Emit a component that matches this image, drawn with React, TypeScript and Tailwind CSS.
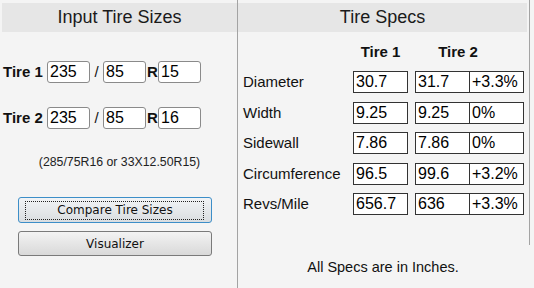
import React from 'react';

const specs = [
  { label: 'Diameter', t1: '30.7', t2: '31.7', diff: '+3.3%' },
  { label: 'Width', t1: '9.25', t2: '9.25', diff: '0%' },
  { label: 'Sidewall', t1: '7.86', t2: '7.86', diff: '0%' },
  { label: 'Circumference', t1: '96.5', t2: '99.6', diff: '+3.2%' },
  { label: 'Revs/Mile', t1: '656.7', t2: '636', diff: '+3.3%' },
];

const SizeInput = ({ value }: { value: string }) => (
  <div className="w-[43px] h-[22px] bg-white border border-[#8a8a8a] rounded-[3px] pl-[2px] text-[16px] leading-[20px] text-black">
    {value}
  </div>
);

const TireRow = ({ label, w, a, r }: { label: string; w: string; a: string; r: string }) => (
  <div className="flex items-center pl-[1px]">
    <span className="font-bold text-[15px] w-[44px]">{label}</span>
    <SizeInput value={w} />
    <span className="w-[13px] text-center text-[15px]">/</span>
    <SizeInput value={a} />
    <span className="font-bold text-[15px] w-[12px] pl-[1px]">R</span>
    <SizeInput value={r} />
  </div>
);

const Cell = ({ value, className = '' }: { value: string; className?: string }) => (
  <div className={`h-[22px] bg-white border border-[#333] pl-[2px] text-[16px] leading-[20px] text-black ${className}`}>
    {value}
  </div>
);

export default function App() {
  return (
    <div
      className="w-[534px] h-[288px] bg-[#f4f4f4] flex text-[#111]"
      style={{ fontFamily: '"Liberation Sans", Arial, sans-serif' }}
    >
      {/* Input panel */}
      <div className="w-[238px] h-full pl-[2px] border-r border-[#a3a3a3]">
        <div className="mt-[3px] h-[29px] bg-[#e6e6e6] flex items-center justify-center text-[18px] text-[#1a1a1a]">
          Input Tire Sizes
        </div>
        <div className="mt-[29px]">
          <TireRow label="Tire 1" w="235" a="85" r="15" />
        </div>
        <div className="mt-[23px]">
          <TireRow label="Tire 2" w="235" a="85" r="16" />
        </div>
        <div className="mt-[26px] text-center text-[12.3px] leading-[14px] text-[#222]">
          (285/75R16 or 33X12.50R15)
        </div>
        <div className="mt-[28px] ml-[16px] w-[194px] flex flex-col gap-[8px]" style={{ fontFamily: '"DejaVu Sans", sans-serif' }}>
          <button className="relative h-[26px] rounded-[3px] border border-[#3c8ec8] bg-gradient-to-b from-[#f2f4f6] to-[#d9dde0] text-[12px] text-[#111]">
            <span className="absolute left-[6px] right-[7px] top-[3px] bottom-[2px] border border-dotted border-[#222]" />
            Compare Tire Sizes
          </button>
          <button className="h-[25px] rounded-[3px] border border-[#7a7a7a] bg-gradient-to-b from-[#f3f3f3] to-[#d9d9d9] text-[12px] text-[#111]">
            Visualizer
          </button>
        </div>
      </div>

      {/* Specs panel */}
      <div className="flex flex-col">
        <div className="w-[292px] h-[245px] pr-[2px] border-r border-[#a3a3a3]">
          <div className="mt-[3px] h-[29px] bg-[#e6e6e6] flex items-center justify-center text-[18px] text-[#1a1a1a]">
            Tire Specs
          </div>
          <div className="mt-[11px] flex font-bold text-[15px] leading-[17px]">
            <span className="w-[115px]" />
            <span className="w-[55px] text-center">Tire 1</span>
            <span className="w-[7px]" />
            <span className="w-[86px] text-center">Tire 2</span>
          </div>
          <div className="mt-[11px] flex flex-col gap-[8px] pl-[5px]">
            {specs.map((s) => (
              <div key={s.label} className="flex items-center">
                <span className="w-[110px] text-[15px]">{s.label}</span>
                <Cell value={s.t1} className="w-[55px]" />
                <span className="w-[7px]" />
                <Cell value={s.t2} className="w-[55px]" />
                <Cell value={s.diff} className="w-[54px] border-l-0" />
              </div>
            ))}
          </div>
        </div>
        <div className="w-[290px] mt-[12px] text-center text-[14.5px] text-[#111]">
          All Specs are in Inches.
        </div>
      </div>
    </div>
  );
}
